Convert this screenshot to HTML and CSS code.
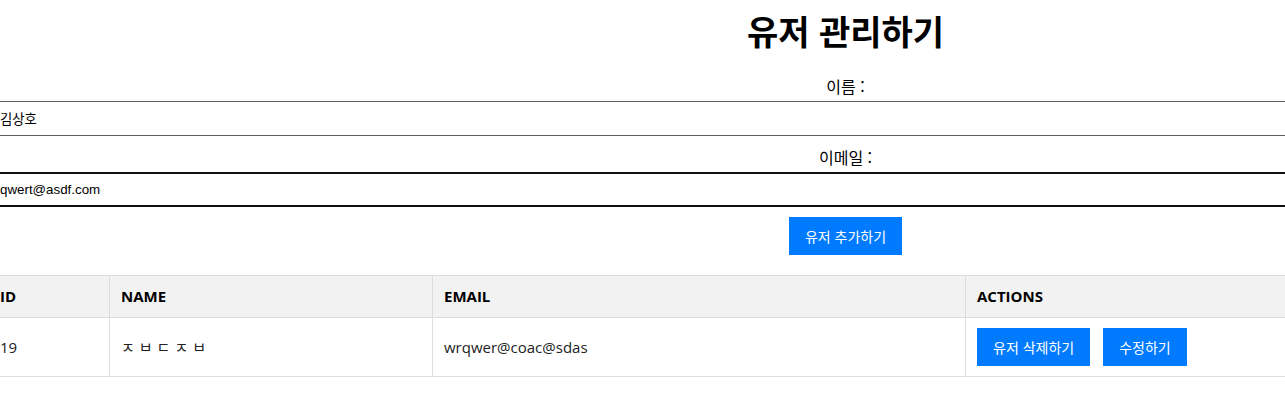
FILE: index.html
```html
<!DOCTYPE html>
<html lang="ko">
<head>
<meta charset="utf-8">
<title>유저 관리하기</title>
<link rel="stylesheet" href="styles.css">
</head>
<body>
<div class="page">
  <h1 class="title">유저 관리하기</h1>
  <form class="user-form">
    <label class="field-label" for="name">이름 :</label>
    <input class="field-input" id="name" type="text" value="김상호">
    <label class="field-label second" for="email">이메일 :</label>
    <input class="field-input focused" id="email" type="text" value="qwert@asdf.com">
    <button class="btn add-btn" type="button">유저 추가하기</button>
  </form>
  <table class="user-table">
    <colgroup>
      <col class="c-id"><col class="c-name"><col class="c-email"><col class="c-actions">
    </colgroup>
    <thead>
      <tr><th>ID</th><th>NAME</th><th>EMAIL</th><th>ACTIONS</th></tr>
    </thead>
    <tbody>
      <tr>
        <td>19</td>
        <td class="jamo">ㅈㅂㄷㅈㅂ</td>
        <td>wrqwer@coac@sdas</td>
        <td><div class="actions"><button class="btn" type="button">유저 삭제하기</button><button class="btn" type="button">수정하기</button></div></td>
      </tr>
    </tbody>
  </table>
</div>
</body>
</html>
```

FILE: styles.css
```css
html, body {
  margin: 0;
  padding: 0;
  background: #fff;
  overflow: hidden;
}
body {
  font-family: "Noto Sans", "Noto Sans CJK KR", sans-serif;
  color: #000;
}
.page {
  width: 1715px;
  margin-left: -12px;
}
.title {
  margin: 7px 0 0;
  font-family: "Noto Sans CJK KR", sans-serif;
  font-size: 34px;
  line-height: 48px;
  font-weight: 700;
  text-align: center;
}
.user-form {
  display: flex;
  flex-direction: column;
  align-items: center;
  margin-top: 19px;
}
.field-label {
  font-family: "Noto Sans CJK KR", sans-serif;
  font-size: 16px;
  line-height: 24px;
  height: 24px;
  margin-bottom: 3px;
}
.field-label.second {
  margin-top: 9px;
}
.field-input {
  box-sizing: border-box;
  width: 100%;
  height: 35px;
  margin: 0;
  padding: 0 12px;
  border: none;
  border-top: 1px solid #5f5f5f;
  border-bottom: 1px solid #5f5f5f;
  font-family: "Liberation Sans", "Noto Sans CJK KR", sans-serif;
  font-size: 13.33px;
  color: #000;
  background: #fff;
  outline: none;
}
.field-input.focused {
  border-top: 2px solid #111;
  border-bottom: 2px solid #111;
}
.btn {
  height: 38px;
  padding: 0 16px;
  border: none;
  background: #007bff;
  color: #fff;
  font-family: "Noto Sans CJK KR", sans-serif;
  font-size: 14px;
  cursor: pointer;
}
.add-btn {
  margin-top: 10px;
}
.user-table {
  width: 100%;
  margin-top: 20px;
  border-collapse: collapse;
  table-layout: fixed;
  font-family: "Open Sans", "Noto Sans CJK KR", sans-serif;
  font-size: 15px;
}
.c-id { width: 121px; }
.c-name { width: 323px; }
.c-email { width: 533px; }
.user-table th,
.user-table td {
  border: 1px solid #ddd;
  padding: 10px 11px;
  text-align: left;
}
.user-table th {
  background: #f2f2f2;
  font-weight: 700;
  line-height: 21px;
}
.user-table td {
  line-height: 22px;
  color: #222;
}
.jamo {
  font-family: "Noto Sans CJK KR", sans-serif;
  font-size: 15px;
  letter-spacing: 4px;
  font-weight: 400;
}
.actions {
  display: flex;
  gap: 13px;
}
```
